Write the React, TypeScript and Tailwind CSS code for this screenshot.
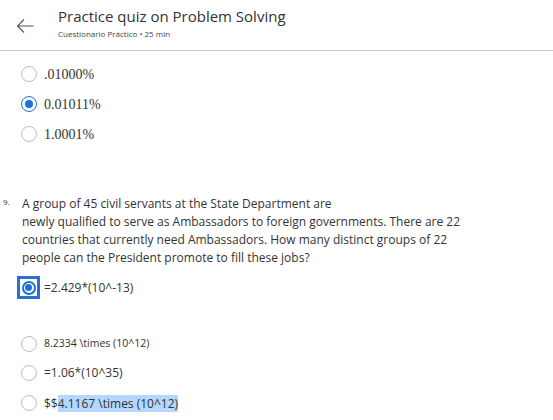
import React from 'react';

const sans = { fontFamily: '"Open Sans", "Noto Sans", sans-serif' };

function Radio({ checked = false }: { checked?: boolean }) {
  return (
    <span
      className={`flex h-[16px] w-[16px] shrink-0 items-center justify-center rounded-full border-[1.5px] ${
        checked ? 'border-[#1f6fd6]' : 'border-[#bdbdbd]'
      } bg-white`}
    >
      {checked && <span className="h-[8px] w-[8px] rounded-full bg-[#1f6fd6]" />}
    </span>
  );
}

export default function App() {
  return (
    <div className="w-[553px] h-[420px] overflow-hidden bg-white text-[#333]" style={sans}>
      {/* Header */}
      <div className="flex h-[51px] items-start border-b border-[#c8c8c8]">
        <svg width="18" height="14" viewBox="0 0 18 14" className="ml-[16px] mt-[19px] shrink-0" fill="none" stroke="#555" strokeWidth="1.1">
          <path d="M17.5 7H1.5M8 0.5L1.5 7L8 13.5" />
        </svg>
        <div className="ml-[24px] mt-[6px]">
          <h1 className="text-[15px] leading-[20px] text-[#333]">Practice quiz on Problem Solving</h1>
          <p className="mt-[2px] text-[8px] leading-[12px] text-[#444]">Cuestionario Práctico • 25 min</p>
        </div>
      </div>

      {/* Previous question options */}
      <div className="mt-[8px] flex flex-col" style={{ fontFamily: '"Liberation Serif", "DejaVu Serif", serif' }}>
        {[
          ['.01000%', false],
          ['0.01011%', true],
          ['1.0001%', false],
        ].map(([label, checked]) => (
          <label key={label as string} className="flex h-[30px] items-center gap-[7px] pl-[21px] text-[14px] text-[#333]">
            <Radio checked={checked as boolean} />
            <span>{label}</span>
          </label>
        ))}
      </div>

      {/* Question 9 */}
      <div className="mt-[46px] flex">
        <span className="w-[22px] shrink-0 pl-[3px] pt-[1px] text-[8px] leading-[12px]">9.</span>
        <div className="w-[445px] text-[12px] leading-[18px] text-[#333]">
          <p>A group of 45 civil servants at the State Department are</p>
          <p>
            newly qualified to serve as Ambassadors to foreign governments. There are 22 countries that currently need
            Ambassadors. How many distinct groups of 22 people can the President promote to fill these jobs?
          </p>
        </div>
      </div>

      <div className="mt-[9px] flex items-center gap-[4px] pl-[17px]">
        <span className="flex h-[23px] w-[23px] items-center justify-center border-[3px] border-[#2a6fd3] bg-white">
          <span className="flex h-[14px] w-[14px] items-center justify-center rounded-full border-2 border-[#1f6fd6]">
            <span className="h-[7px] w-[7px] rounded-full bg-[#1f6fd6]" />
          </span>
        </span>
        <span className="text-[12px] text-[#333]">=2.429*(10^-13)</span>
      </div>

      <div className="mt-[30px] flex flex-col">
        <div className="flex h-[29px] items-center gap-[7px] pl-[21px]">
          <Radio />
          <span className="text-[10.5px] text-[#333]">8.2334 \times (10^12)</span>
        </div>
        <div className="flex h-[30px] items-center gap-[7px] pl-[21px]">
          <Radio />
          <span className="text-[12px] text-[#333]">=1.06*(10^35)</span>
        </div>
        <div className="flex h-[30px] items-center gap-[7px] pl-[21px]">
          <Radio />
          <span className="text-[12px] leading-[17px] text-[#333]">
            $$<span className="bg-[#b3d7fe]">4.1167 \times (10^12)</span>
          </span>
        </div>
      </div>
    </div>
  );
}
